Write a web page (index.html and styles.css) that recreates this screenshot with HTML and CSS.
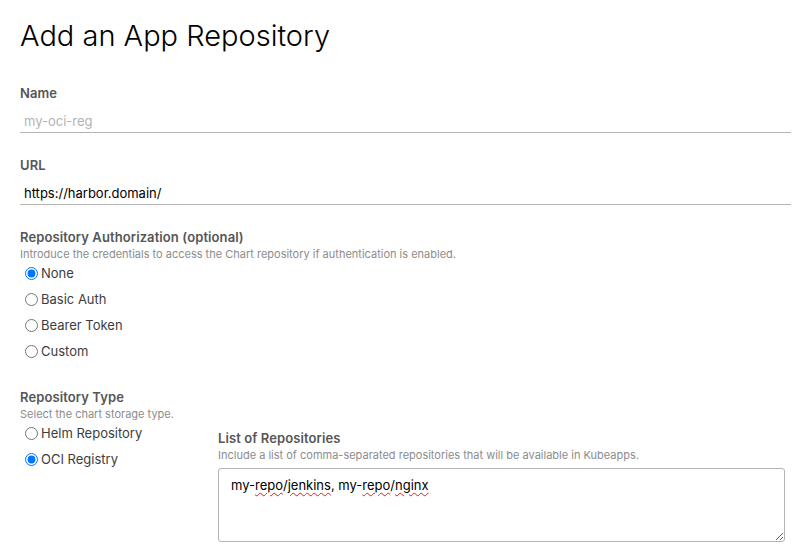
FILE: index.html
```html
<!DOCTYPE html>
<html lang="en">
<head>
<meta charset="utf-8">
<title>Add an App Repository</title>
<link rel="stylesheet" href="styles.css">
</head>
<body>
<main class="page">
  <h1 class="title">Add an App Repository</h1>

  <div class="field">
    <label class="label" for="name">Name</label>
    <input class="text-input" id="name" type="text" placeholder="my-oci-reg">
  </div>

  <div class="field">
    <label class="label" for="url">URL</label>
    <input class="text-input" id="url" type="text" value="https://harbor.domain/">
  </div>

  <div class="field auth-field">
    <div class="label">Repository Authorization (optional)</div>
    <div class="help">Introduce the credentials to access the Chart repository if authentication is enabled.</div>
    <div class="radios">
      <label class="radio"><input type="radio" name="auth" checked><span>None</span></label>
      <label class="radio"><input type="radio" name="auth"><span>Basic Auth</span></label>
      <label class="radio"><input type="radio" name="auth"><span>Bearer Token</span></label>
      <label class="radio"><input type="radio" name="auth"><span>Custom</span></label>
    </div>
  </div>

  <div class="field type-field">
    <div class="label">Repository Type</div>
    <div class="help">Select the chart storage type.</div>
    <div class="type-row">
      <div class="radios type-radios">
        <label class="radio"><input type="radio" name="type"><span>Helm Repository</span></label>
        <label class="radio"><input type="radio" name="type" checked><span>OCI Registry</span></label>
      </div>
      <div class="repo-list">
        <div class="label">List of Repositories</div>
        <div class="help">Include a list of comma-separated repositories that will be available in Kubeapps.</div>
        <div class="textarea">my-<span class="spell">repo</span>/<span class="spell">jenkins</span>, my-<span class="spell">repo</span>/<span class="spell">nginx</span></div>
      </div>
    </div>
  </div>
</main>
</body>
</html>
```

FILE: styles.css
```css
* { box-sizing: border-box; }

html, body {
  margin: 0;
  padding: 0;
  background: #fff;
}

body {
  font-family: Inter, "Liberation Sans", sans-serif;
  color: #333;
}

.page {
  padding: 18px 20px 0 20px;
  display: flex;
  flex-direction: column;
}

.title {
  margin: 0 0 30px 0;
  font-size: 29px;
  line-height: 36px;
  font-weight: 300;
  color: #000;
}

.field {
  display: flex;
  flex-direction: column;
  margin-bottom: 23px;
}

.auth-field {
  margin-bottom: 24px;
}

.label {
  font-size: 13px;
  line-height: 18px;
  font-weight: 600;
  color: #565656;
  letter-spacing: 0.1px;
}

.help {
  font-size: 11px;
  line-height: 16px;
  color: #8c8c8c;
}

.text-input {
  margin-top: 6px;
  height: 25px;
  border: none;
  border-bottom: 1px solid #b3b3b3;
  padding: 1px 4px 0 4px;
  font-family: inherit;
  font-size: 13px;
  color: #000;
  outline: none;
  background: transparent;
}

.text-input::placeholder {
  color: #b3b3b3;
}

.radios {
  display: flex;
  flex-direction: column;
  margin-top: -2px;
}

.radio {
  display: flex;
  align-items: center;
  height: 26px;
  font-size: 13px;
  color: #3d3d3d;
}

.radio input {
  margin: 0 3px 0 5px;
  width: 13px;
  height: 13px;
}

.type-row {
  display: flex;
}

.type-radios {
  width: 198px;
  flex: none;
}

.repo-list {
  display: flex;
  flex-direction: column;
  padding-top: 7px;
}

.textarea {
  margin-top: 5px;
  width: 567px;
  height: 74px;
  border: 1px solid #b3b3b3;
  border-radius: 3px;
  padding: 8px 12px;
  font-size: 13px;
  line-height: 16px;
  color: #000;
  resize: both;
  overflow: auto;
}

.spell {
  text-decoration: underline wavy #e02020;
  text-decoration-thickness: 1px;
  text-underline-offset: 2px;
}
```
